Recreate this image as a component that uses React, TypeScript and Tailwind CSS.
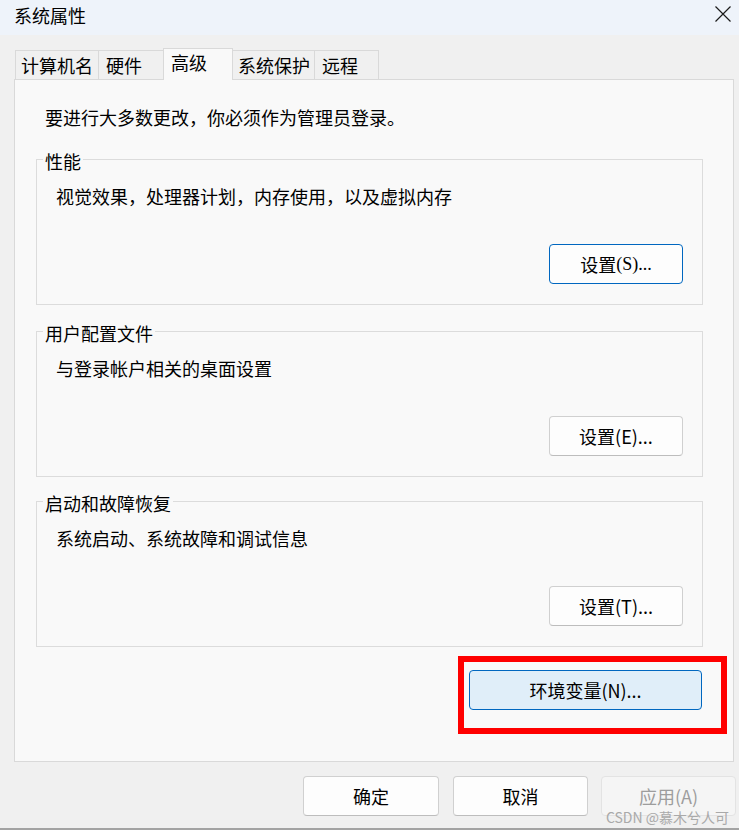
import type React from "react";

type Variant = "default" | "normal" | "accent" | "disabled";

const variantClass: Record<Variant, string> = {
  default: "border-[#0067c0] bg-[#fdfdfd] text-black",
  normal: "border-[#d0d0d0] border-b-[#bdbdbd] bg-[#fdfdfd] text-black",
  accent: "border-[#0067c0] bg-[#e0eef9] text-black",
  disabled: "border-[#e3e3e3] bg-[#f5f5f5] text-[#9d9d9d]",
};

function WinButton({
  children,
  variant = "normal",
  className = "",
}: {
  children: React.ReactNode;
  variant?: Variant;
  className?: string;
}): React.ReactElement {
  return (
    <button
      type="button"
      className={`flex h-[40px] items-center justify-center rounded-[4px] border text-[18px] leading-[26px] ${variantClass[variant]} ${className}`}
    >
      {children}
    </button>
  );
}

function GroupBox({
  title,
  desc,
  button,
  className = "",
}: {
  title: string;
  desc: string;
  button: React.ReactNode;
  className?: string;
}): React.ReactElement {
  return (
    <div className={`relative ml-[21px] h-[146px] w-[667px] border border-[#dcdcdc] ${className}`}>
      <span className="absolute -top-[12px] left-[6px] bg-[#f9f9f9] px-[2px] text-[18px] leading-[26px]">
        {title}
      </span>
      <p className="pl-[19px] pt-[23px] text-[18px] leading-[26px]">{desc}</p>
      <div className="mt-[35px] flex justify-end pr-[19px]">{button}</div>
    </div>
  );
}

function CloseIcon(): React.ReactElement {
  return (
    <svg width="16" height="16" viewBox="0 0 16 16" className="mt-[6px]">
      <path d="M0.5 0.5L15.5 15.5M15.5 0.5L0.5 15.5" stroke="#1b1b1b" strokeWidth="1.2" fill="none" />
    </svg>
  );
}

export default function App(): React.ReactElement {
  return (
    <div className="relative flex h-[830px] w-[739px] flex-col overflow-hidden bg-[#f0f0f0] font-['Noto_Sans_CJK_SC','Noto_Sans',sans-serif] text-black">
      {/* title bar */}
      <header className="flex h-[35px] items-start justify-between bg-[#eef3fa] pl-[14px] pr-[8px]">
        <h1 className="pt-[2px] text-[18px] leading-[26px] font-normal">系统属性</h1>
        <CloseIcon />
      </header>

      {/* tabs */}
      <div className="flex h-[44px] items-end pl-[15px]">
        <div className="h-[29px] w-[83px] border-l border-t border-[#d9d9d9] pl-[5px] pt-[1px] text-[18px] leading-[26px]">
          计算机名
        </div>
        <div className="h-[29px] w-[65px] border-l border-t border-[#d9d9d9] pl-[7px] pt-[1px] text-[18px] leading-[26px]">
          硬件
        </div>
        <div className="relative z-10 -mb-px h-[32px] w-[70px] border-x border-t border-[#d9d9d9] bg-[#f9f9f9] pl-[7px] text-[18px] leading-[26px]">
          高级
        </div>
        <div className="h-[29px] w-[81px] border-t border-[#d9d9d9] pl-[5px] pt-[1px] text-[18px] leading-[26px]">
          系统保护
        </div>
        <div className="h-[29px] w-[65px] border-x border-t border-[#d9d9d9] pl-[7px] pt-[1px] text-[18px] leading-[26px]">
          远程
        </div>
      </div>

      {/* tab panel */}
      <section className="ml-[14px] h-[683px] w-[720px] border border-[#d9d9d9] bg-[#f9f9f9]">
        <p className="pl-[30px] pt-[24px] text-[18px] leading-[26px]">要进行大多数更改，你必须作为管理员登录。</p>

        <GroupBox
          className="mt-[29px]"
          title="性能"
          desc="视觉效果，处理器计划，内存使用，以及虚拟内存"
          button={
            <WinButton variant="default" className="w-[134px]">
              设置<span className="font-['Liberation_Serif',serif]">(S)...</span>
            </WinButton>
          }
        />
        <GroupBox
          className="mt-[26px]"
          title="用户配置文件"
          desc="与登录帐户相关的桌面设置"
          button={<WinButton className="w-[134px]">设置(E)...</WinButton>}
        />
        <GroupBox
          className="mt-[24px]"
          title="启动和故障恢复"
          desc="系统启动、系统故障和调试信息"
          button={<WinButton className="w-[134px]">设置(T)...</WinButton>}
        />

        <div className="mt-[23px] flex justify-end pr-[31px]">
          <div className="relative">
            <WinButton variant="accent" className="w-[233px]">
              环境变量(N)...
            </WinButton>
            {/* red annotation frame */}
            <span className="pointer-events-none absolute -left-[11px] -top-[14px] h-[78px] w-[269px] border-[6px] border-[#ff0000]" />
          </div>
        </div>
      </section>

      {/* dialog buttons */}
      <div className="mt-[14px] flex justify-end gap-[14px] pr-[3px]">
        <WinButton className="w-[136px]">确定</WinButton>
        <WinButton className="w-[135px]">取消</WinButton>
        <WinButton variant="disabled" className="-ml-px w-[135px]">
          应用(A)
        </WinButton>
      </div>

      <div className="mt-auto h-[2px] bg-[#a3a3a3]" />

      <span className="absolute bottom-[3px] right-[10px] text-[14px] leading-[20px] text-[#a9a9a9]">
        CSDN @慕木兮人可
      </span>
    </div>
  );
}
